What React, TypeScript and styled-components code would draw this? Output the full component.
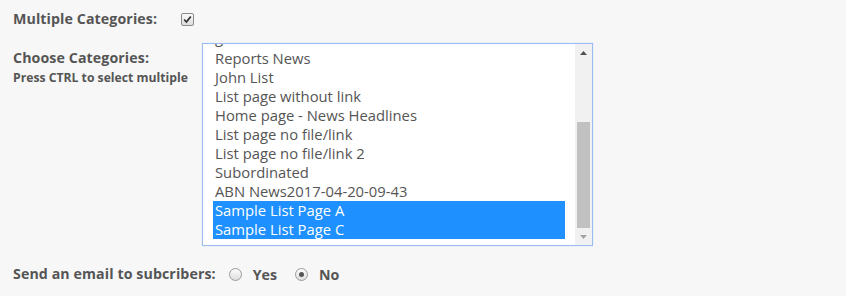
import React from "react";
import styled, { createGlobalStyle } from "styled-components";

const Global = createGlobalStyle`
  html, body { margin: 0; padding: 0; background: #f7f7f7; }
  body { font-family: "Open Sans", "Liberation Sans", sans-serif; color: #555; }
`;

const Form = styled.div`
  display: flex;
  flex-direction: column;
  padding: 9px 0 0 13px;
  width: 846px;
  height: 296px;
  box-sizing: border-box;
`;

const Row = styled.div<{ $mt?: number; $align?: string }>`
  display: flex;
  align-items: ${(p) => p.$align || "center"};
  margin-top: ${(p) => p.$mt || 0}px;
`;

const LabelCol = styled.div<{ $w: number; $pt?: number }>`
  width: ${(p) => p.$w}px;
  padding-top: ${(p) => p.$pt || 0}px;
  display: flex;
  flex-direction: column;
`;

const Label = styled.div`
  font-weight: 700;
  font-size: 14.2px;
  color: #555;
  line-height: 20px;
  letter-spacing: 0.1px;
`;

const Hint = styled.div`
  font-weight: 700;
  font-size: 12.2px;
  color: #555;
  line-height: 16px;
  margin-top: 2px;
`;

const Check = styled.span`
  width: 11px;
  height: 11px;
  border: 1px solid #8a8a8a;
  border-radius: 2px;
  background: linear-gradient(#fafafa, #dcdcdc);
  display: inline-flex;
  align-items: center;
  justify-content: center;
  box-sizing: content-box;
`;

const ListBox = styled.div`
  width: 389px;
  height: 201px;
  border: 1px solid #9cbdf2;
  background: #fff;
  display: flex;
  overflow: hidden;
  box-shadow: 0 0 1px #b8d0f6;
`;

const Options = styled.div`
  flex: 1;
  overflow: hidden;
  padding: 0 10px;
`;

const OptionList = styled.div`
  margin-top: -14px;
`;

const Option = styled.div<{ $sel?: boolean; $cut?: boolean }>`
  height: 19px;
  line-height: ${(p) => (p.$cut ? 15 : 19)}px;
  font-size: 14.8px;
  padding-left: 2px;
  color: ${(p) => (p.$sel ? "#fff" : "#555")};
  background: ${(p) => (p.$sel ? "#1e90ff" : "transparent")};
  white-space: nowrap;
`;

const Scrollbar = styled.div`
  width: 17px;
  background: #f1f1f1;
  display: flex;
  flex-direction: column;
  align-items: center;
`;

const Arrow = styled.div`
  height: 17px;
  width: 17px;
  display: flex;
  align-items: center;
  justify-content: center;
`;

const Track = styled.div`
  flex: 1;
  width: 100%;
  display: flex;
  flex-direction: column;
  align-items: center;
  padding-top: 61px;
  box-sizing: border-box;
`;

const Thumb = styled.div`
  width: 13px;
  height: 106px;
  background: #c1c1c1;
`;

const Radio = styled.span<{ $on?: boolean; $ml: number }>`
  width: 11px;
  height: 11px;
  margin-left: ${(p) => p.$ml}px;
  border-radius: 50%;
  border: 1px solid #9a9a9a;
  background: linear-gradient(#fcfcfc, #dedede);
  display: inline-flex;
  align-items: center;
  justify-content: center;
  box-sizing: content-box;
  &::after {
    content: "";
    width: 5px;
    height: 5px;
    border-radius: 50%;
    background: ${(p) => (p.$on ? "#555" : "transparent")};
  }
`;

const RadioLabel = styled.span<{ $ml: number }>`
  font-weight: 700;
  font-size: 14.2px;
  color: #555;
  margin-left: ${(p) => p.$ml}px;
`;

const items: { t: string; sel?: boolean; cut?: boolean }[] = [
  { t: "general", cut: true },
  { t: "Reports News" },
  { t: "John List" },
  { t: "List page without link" },
  { t: "Home page - News Headlines" },
  { t: "List page no file/link" },
  { t: "List page no file/link 2" },
  { t: "Subordinated" },
  { t: "ABN News2017-04-20-09-43" },
  { t: "Sample List Page A", sel: true },
  { t: "Sample List Page C", sel: true },
];

export default function App() {
  return (
    <>
      <Global />
      <Form>
        <Row>
          <LabelCol $w={168}>
            <Label>Multiple Categories:</Label>
          </LabelCol>
          <Check>
            <svg width="9" height="9" viewBox="0 0 9 9">
              <path d="M1.2 4.6 L3.5 7 L7.8 1.5" fill="none" stroke="#333" strokeWidth="1.8" />
            </svg>
          </Check>
        </Row>
        <Row $mt={14} $align="flex-start">
          <LabelCol $w={189} $pt={5}>
            <Label>Choose Categories:</Label>
            <Hint>Press CTRL to select multiple</Hint>
          </LabelCol>
          <ListBox>
            <Options>
              <OptionList>
                {items.map((it) => (
                  <Option key={it.t} $sel={it.sel} $cut={it.cut}>
                    {it.t}
                  </Option>
                ))}
              </OptionList>
            </Options>
            <Scrollbar>
              <Arrow>
                <svg width="7" height="4" viewBox="0 0 7 4">
                  <path d="M0 4 L3.5 0 L7 4 Z" fill="#505050" />
                </svg>
              </Arrow>
              <Track>
                <Thumb />
              </Track>
              <Arrow>
                <svg width="7" height="4" viewBox="0 0 7 4">
                  <path d="M0 0 L7 0 L3.5 4 Z" fill="#a3a3a3" />
                </svg>
              </Arrow>
            </Scrollbar>
          </ListBox>
        </Row>
        <Row $mt={18}>
          <Label>Send an email to subcribers:</Label>
          <Radio $ml={13} />
          <RadioLabel $ml={11}>Yes</RadioLabel>
          <Radio $on $ml={18} />
          <RadioLabel $ml={11}>No</RadioLabel>
        </Row>
      </Form>
    </>
  );
}
